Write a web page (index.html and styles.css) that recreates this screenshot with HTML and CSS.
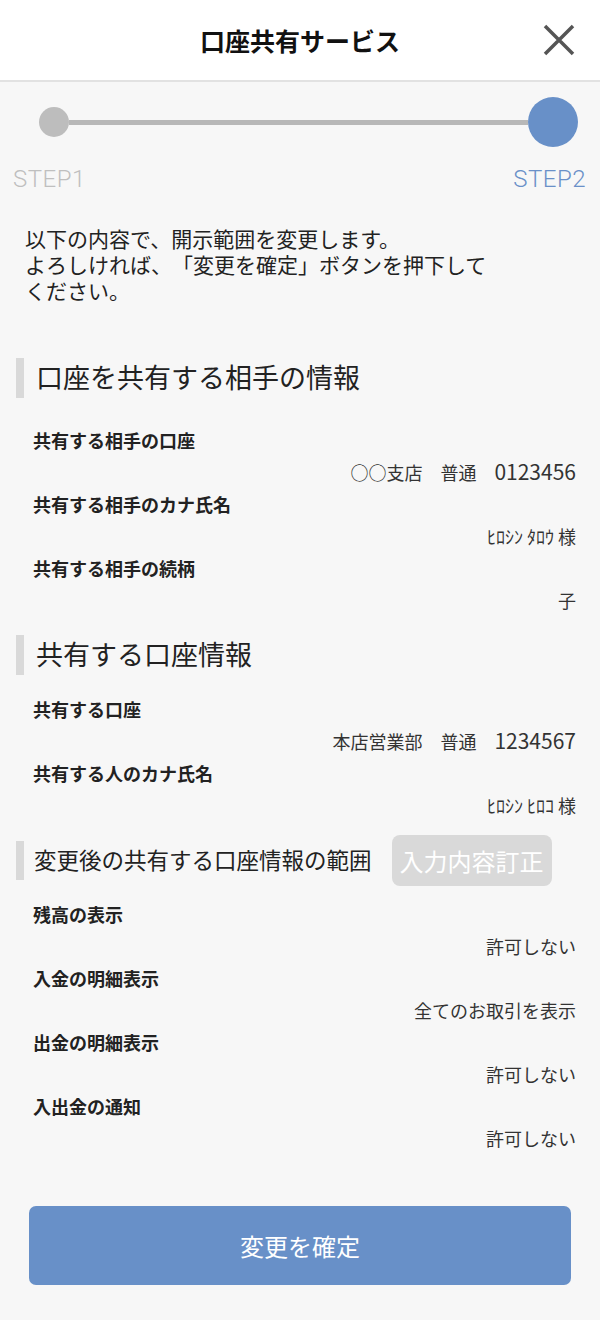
FILE: index.html
```html
<!DOCTYPE html>
<html lang="ja">
<head>
    <meta charset="UTF-8">
    <meta name="viewport" content="width=device-width, initial-scale=1.0">
    <title>口座共有サービス</title>
    <link rel="stylesheet" href="styles.css">
</head>
<body>
    <header class="app-header">
        <span></span>
        <h1 class="app-title">口座共有サービス</h1>
        <button class="close-btn" aria-label="閉じる">
            <svg width="32" height="32" viewBox="0 0 32 32">
                <path d="M2 2 L30 30 M30 2 L2 30" stroke="#555" stroke-width="3.5" fill="none"/>
            </svg>
        </button>
    </header>

    <main class="content">
        <div class="stepper">
            <div class="stepper-track">
                <span class="dot dot-done"></span>
                <span class="track-line"></span>
                <span class="dot dot-current"></span>
            </div>
            <div class="stepper-labels">
                <span class="step-label">STEP1</span>
                <span class="step-label current">STEP2</span>
            </div>
        </div>

        <p class="intro">以下の内容で、開示範囲を変更します。<br>よろしければ、「変更を確定」ボタンを押下して<br>ください。</p>

        <section class="section partner">
            <h2 class="section-head">口座を共有する相手の情報</h2>
            <dl class="info-list">
                <dt>共有する相手の口座</dt>
                <dd>○○支店　普通　<span class="num">0123456</span></dd>
                <dt>共有する相手のカナ氏名</dt>
                <dd>ﾋﾛｼﾝ ﾀﾛｳ 様</dd>
                <dt>共有する相手の続柄</dt>
                <dd>子</dd>
            </dl>
        </section>

        <section class="section account">
            <h2 class="section-head">共有する口座情報</h2>
            <dl class="info-list">
                <dt>共有する口座</dt>
                <dd>本店営業部　普通　<span class="num">1234567</span></dd>
                <dt>共有する人のカナ氏名</dt>
                <dd>ﾋﾛｼﾝ ﾋﾛｺ 様</dd>
            </dl>
        </section>

        <section class="section scope">
            <div class="scope-head">
                <h2 class="section-head small">変更後の共有する口座情報の範囲</h2>
                <button class="edit-btn" disabled>入力内容訂正</button>
            </div>
            <dl class="info-list">
                <dt>残高の表示</dt>
                <dd>許可しない</dd>
                <dt>入金の明細表示</dt>
                <dd>全てのお取引を表示</dd>
                <dt>出金の明細表示</dt>
                <dd>許可しない</dd>
                <dt>入出金の通知</dt>
                <dd>許可しない</dd>
            </dl>
        </section>

        <div class="actions">
            <button class="confirm-btn">変更を確定</button>
        </div>
    </main>
</body>
</html>
```

FILE: styles.css
```css
body {
    margin: 0;
    background: #f7f7f7;
    color: #222;
    font-family: "Noto Sans CJK JP", "Noto Sans", sans-serif;
    text-spacing-trim: space-all;
}

.app-header {
    display: grid;
    grid-template-columns: 1fr auto 1fr;
    align-items: center;
    height: 80px;
    background: #fff;
    border-bottom: 2px solid #e2e2e2;
}

.app-title {
    margin: 0;
    font-size: 25px;
    font-weight: bold;
    color: #111;
}

.close-btn {
    justify-self: end;
    margin-right: 25px;
    padding: 0;
    border: none;
    background: none;
    width: 32px;
    height: 32px;
}

.close-btn svg {
    display: block;
}

/* stepper */
.stepper-track {
    display: flex;
    align-items: center;
    padding: 15px 22px 0 39px;
}

.dot {
    border-radius: 50%;
    flex-shrink: 0;
}

.dot-done {
    width: 30px;
    height: 30px;
    background: #bdbdbd;
}

.dot-current {
    width: 50px;
    height: 50px;
    background: #6890c8;
}

.track-line {
    flex: 1;
    height: 5px;
    background: #b8b8b8;
}

.stepper-labels {
    display: flex;
    justify-content: space-between;
    margin-top: 20px;
    padding: 0 14px 0 13px;
}

.step-label {
    font-family: Roboto, "Noto Sans", sans-serif;
    font-size: 24px;
    font-weight: 300;
    letter-spacing: 0.5px;
    line-height: 24px;
    color: #bfbfbf;
}

.step-label.current {
    color: #6a90c8;
}

.intro {
    margin: 34px 0 0;
    padding-left: 25px;
    font-size: 21px;
    line-height: 26px;
    color: #222;
}

/* sections */
.section-head {
    display: flex;
    align-items: center;
    box-sizing: border-box;
    margin: 0 0 0 16px;
    padding: 0 0 4px 12px;
    border-left: 8px solid #d9d9d9;
    height: 40px;
    font-size: 27px;
    font-weight: normal;
    color: #222;
}

.section.partner {
    margin-top: 55px;
}

.section.account {
    margin-top: 19px;
}

.section.scope {
    margin-top: 14px;
}

.scope-head {
    display: flex;
    align-items: center;
    gap: 20px;
    height: 50px;
}

.section-head.small {
    height: 39px;
    padding: 0 0 2px 10px;
    font-size: 22.5px;
}

.edit-btn {
    height: 51px;
    padding: 0 8px;
    border: none;
    border-radius: 8px;
    background: #d9d9d9;
    color: #fff;
    font-family: inherit;
    font-size: 24px;
}

.info-list {
    margin: 18px 0 0;
    padding: 0 24px 0 33px;
}

.partner .info-list {
    margin-top: 26px;
}

.scope .info-list {
    margin-top: 13px;
}

.info-list dt {
    font-size: 18px;
    font-weight: bold;
    line-height: 32px;
}

.info-list dd {
    margin: 0;
    text-align: right;
    font-size: 18px;
    line-height: 32px;
    color: #333;
}

.info-list .num {
    font-size: 21px;
    line-height: 1;
}

.actions {
    padding: 52px 29px 34px;
}

.confirm-btn {
    display: block;
    width: 100%;
    height: 79px;
    border: none;
    border-radius: 7px;
    background: #6890c8;
    color: #fff;
    font-family: inherit;
    font-size: 24px;
}
```
